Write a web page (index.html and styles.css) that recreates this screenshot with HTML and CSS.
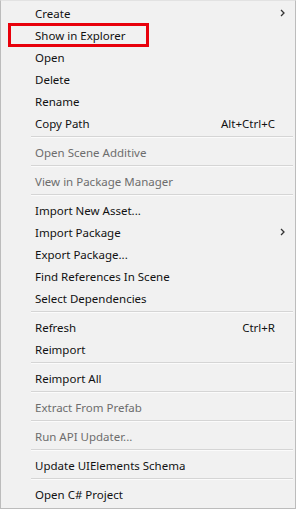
FILE: index.html
```html
<!DOCTYPE html>
<html>
<head>
    <title>Context Menu</title>
    <link rel="stylesheet" href="styles.css">
</head>
<body>
    <div class="menu">
        <div class="item">Create<span class="arrow"><svg width="5" height="8" viewBox="0 0 5 8"><path d="M1 1 L4 4 L1 7" fill="none" stroke="#333" stroke-width="1.3"/></svg></span></div>
        <div class="item">Show in Explorer</div>
        <div class="item">Open</div>
        <div class="item">Delete</div>
        <div class="item">Rename</div>
        <div class="item">Copy Path<span class="key">Alt+Ctrl+C</span></div>
        <div class="sep"></div>
        <div class="item disabled">Open Scene Additive</div>
        <div class="sep"></div>
        <div class="item disabled">View in Package Manager</div>
        <div class="sep"></div>
        <div class="item">Import New Asset...</div>
        <div class="item">Import Package<span class="arrow"><svg width="5" height="8" viewBox="0 0 5 8"><path d="M1 1 L4 4 L1 7" fill="none" stroke="#333" stroke-width="1.3"/></svg></span></div>
        <div class="item">Export Package...</div>
        <div class="item">Find References In Scene</div>
        <div class="item">Select Dependencies</div>
        <div class="sep"></div>
        <div class="item">Refresh<span class="key">Ctrl+R</span></div>
        <div class="item">Reimport</div>
        <div class="sep"></div>
        <div class="item">Reimport All</div>
        <div class="sep"></div>
        <div class="item disabled">Extract From Prefab</div>
        <div class="sep"></div>
        <div class="item disabled">Run API Updater...</div>
        <div class="sep"></div>
        <div class="item">Update UIElements Schema</div>
        <div class="sep"></div>
        <div class="item">Open C# Project</div>

        <!-- annotation box drawn over the menu -->
        <div class="highlight"></div>
    </div>
</body>
</html>
```

FILE: styles.css
```css
body { margin: 0; font-family: "Noto Sans", "Liberation Sans", sans-serif; }
.menu {
    position: relative;
    width: 296px;
    height: 509px;
    box-sizing: border-box;
    background: #f1f1f1;
    border: 1px solid #bcbcbc;
    border-top-color: #e2e2e2;
    padding: 1px 0 2px 0;
}
.item {
    display: flex;
    align-items: center;
    height: 22px;
    padding: 0 20px 0 34px;
    font-size: 11.5px;
    color: #111;
    white-space: nowrap;
}
.item.disabled { color: #6d6d6d; }
.key { margin-left: auto; }
.arrow {
    margin-left: auto;
    margin-right: -10px;
    display: flex;
}
.sep {
    height: 1px;
    margin: 2px 2px 3px 30px;
    background: #d5d5d5;
    border-bottom: 1px solid #fbfbfb;
}
.highlight {
    position: absolute;
    left: 7px;
    top: 22px;
    width: 135px;
    height: 18px;
    border: 3px solid #e8000b;
}
```
